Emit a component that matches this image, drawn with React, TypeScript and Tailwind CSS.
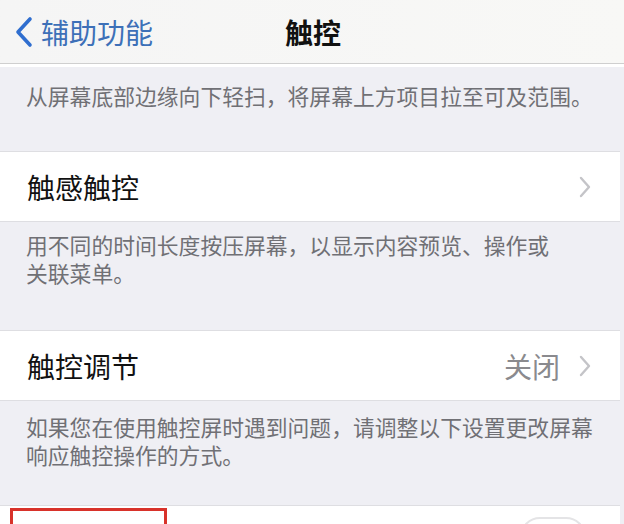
import React from "react";

const font = { fontFamily: '"Noto Sans CJK SC", "Noto Sans", sans-serif' };

function Chevron() {
  return (
    <svg width="14" height="22" viewBox="0 0 14 22" className="shrink-0">
      <path d="M3 2 L11 11 L3 20" fill="none" stroke="#c4c4c8" strokeWidth="2.4" strokeLinecap="round" strokeLinejoin="round" />
    </svg>
  );
}

function Row({ label, value }: { label: string; value?: string }) {
  return (
    <div className="w-[620px] h-[71px] shrink-0 bg-white border-y border-[#dedee2] flex items-center pl-[27px] pr-[28px]">
      <span className="text-[28px] text-[#111] leading-none flex-1">{label}</span>
      {value && <span className="text-[28px] text-[#8a8a8e] leading-none mr-[18px]">{value}</span>}
      <Chevron />
    </div>
  );
}

function Desc({ lines, className }: { lines: string[]; className: string }) {
  return (
    <div className={"shrink-0 pl-[26px] pr-[10px] text-[21.8px] leading-[28px] text-[#707075] " + className}>
      {lines.map((l, i) => (
        <div key={i} className="whitespace-nowrap">{l}</div>
      ))}
    </div>
  );
}

export default function App() {
  return (
    <div className="w-[624px] h-[524px] overflow-hidden bg-[#efeff4] flex flex-col" style={font}>
      <div className="h-[63px] bg-gradient-to-r from-[#f5f5f5] to-[#f8f8f6] flex items-center relative shrink-0">
        <div className="flex items-center pl-[14px] gap-[7px]">
          <svg width="20" height="32" viewBox="0 0 20 32">
            <path d="M16 3 L4 16 L16 29" fill="none" stroke="#2f6ecf" strokeWidth="3.6" strokeLinecap="round" strokeLinejoin="round" />
          </svg>
          <span className="text-[28px] text-[#3d70b8] leading-none">辅助功能</span>
        </div>
        <div className="absolute left-0 right-0 top-0 h-[63px] flex items-center justify-center pointer-events-none">
          <span className="text-[28px] font-bold text-[#111] leading-none pl-[2px]">触控</span>
        </div>
      </div>
      <div className="h-[1px] bg-[#cfcfcf] shrink-0" />
      <div className="h-[3px] bg-white shrink-0" />
      <Desc className="pt-[15px] pb-[41px]" lines={["从屏幕底部边缘向下轻扫，将屏幕上方项目拉至可及范围。"]} />
      <Row label="触感触控" />
      <Desc className="pt-[9px] pb-[43px]" lines={["用不同的时间长度按压屏幕，以显示内容预览、操作或", "关联菜单。"]} />
      <Row label="触控调节" value="关闭" />
      <Desc className="pt-[12px] pb-[36px]" lines={["如果您在使用触控屏时遇到问题，请调整以下设置更改屏幕", "响应触控操作的方式。"]} />
      <div className="w-[620px] h-[40px] shrink-0 bg-white border-t border-[#dedee2] flex items-start relative">
        <div className="ml-[10px] mt-[2px] w-[157px] h-[40px] border-[3px] border-[#d8322a]" />
        <div className="ml-auto mr-[34px] mt-[11px] w-[66px] h-[40px] rounded-full border-[2px] border-[#e4e4e6] bg-white" />
      </div>
    </div>
  );
}
